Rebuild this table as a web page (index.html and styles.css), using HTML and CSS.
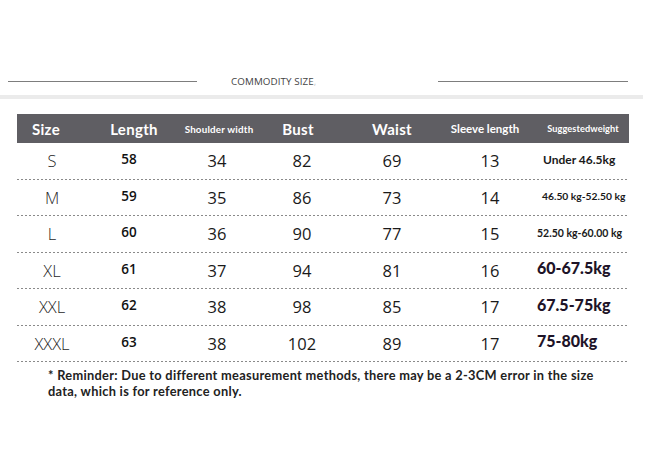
FILE: index.html
```html
<!DOCTYPE html>
<html>
<head>
<meta charset="utf-8">
<link rel="stylesheet" href="styles.css">
</head>
<body>
<div class="page">
  <div class="title-row">
    <span class="rule rule-left"></span>
    <span class="title">COMMODITY SIZE<span class="comma">,</span></span>
    <span class="spacer"></span>
    <span class="rule rule-right"></span>
  </div>
  <div class="band"></div>

  <div class="table">
    <div class="head">
      <div class="hc big">Size</div>
      <div class="hc big">Length</div>
      <div class="hc small">Shoulder width</div>
      <div class="hc big">Bust</div>
      <div class="hc big">Waist</div>
      <div class="hc mid">Sleeve length</div>
      <div class="hc tiny">Suggestedweight</div>
    </div>

    <div class="row">
      <div class="c size">S</div><div class="c len">58</div><div class="c num">34</div><div class="c num">82</div><div class="c num">69</div><div class="c num">13</div><div class="c w w-a">Under 46.5kg</div>
    </div>
    <div class="row">
      <div class="c size">M</div><div class="c len">59</div><div class="c num">35</div><div class="c num">86</div><div class="c num">73</div><div class="c num">14</div><div class="c w w-b">46.50 kg-52.50 kg</div>
    </div>
    <div class="row">
      <div class="c size">L</div><div class="c len">60</div><div class="c num">36</div><div class="c num">90</div><div class="c num">77</div><div class="c num">15</div><div class="c w w-c">52.50 kg-60.00 kg</div>
    </div>
    <div class="row">
      <div class="c size">XL</div><div class="c len">61</div><div class="c num">37</div><div class="c num">94</div><div class="c num">81</div><div class="c num">16</div><div class="c w w-big">60-67.5kg</div>
    </div>
    <div class="row">
      <div class="c size">XXL</div><div class="c len">62</div><div class="c num">38</div><div class="c num">98</div><div class="c num">85</div><div class="c num">17</div><div class="c w w-big">67.5-75kg</div>
    </div>
    <div class="row">
      <div class="c size">XXXL</div><div class="c len">63</div><div class="c num">38</div><div class="c num">102</div><div class="c num">89</div><div class="c num">17</div><div class="c w w-big">75-80kg</div>
    </div>
  </div>

  <p class="note">* Reminder: Due to different measurement methods, there may be a 2-3CM error in the size<br>data, which is for reference only.</p>
</div>
</body>
</html>
```

FILE: styles.css
```css
html, body {
  margin: 0;
  padding: 0;
  background: #ffffff;
}

.page {
  width: 645px;
  height: 469px;
  padding-top: 74px;
  box-sizing: border-box;
  font-family: "Lato", "Open Sans", sans-serif;
  color: #222;
}

.title-row {
  display: flex;
  align-items: center;
  height: 14px;
  padding-left: 8px;
  padding-right: 17px;
}

.rule {
  display: block;
  height: 1px;
  background: #7d7d7d;
}

.rule-left {
  width: 189px;
}

.rule-right {
  width: 190px;
}

.title {
  margin-left: 34px;
  font-family: "Open Sans", sans-serif;
  font-size: 9.8px;
  color: #444;
  letter-spacing: 0.1px;
}

.comma {
  color: #c8c8c8;
}

.spacer {
  flex: 1;
}

.band {
  margin-top: 7px;
  height: 4px;
  background: #ebebeb;
  margin-right: 2px;
}

.table {
  margin: 15px 16px 0 17px;
}

.head {
  display: grid;
  grid-template-columns: 58px 118px 52px 106px 82px 104px 92px;
  height: 29px;
  background: #5f5e63;
  color: #ffffff;
  font-weight: 700;
}

.hc {
  display: flex;
  align-items: center;
  justify-content: center;
  white-space: nowrap;
}

.hc.big {
  font-size: 15px;
  letter-spacing: 0.3px;
}

.hc.mid {
  font-size: 11.5px;
}

.hc.small {
  font-size: 9.8px;
  letter-spacing: 0.2px;
}

.hc.tiny {
  font-size: 9.2px;
  letter-spacing: 0.1px;
}

.row {
  display: grid;
  grid-template-columns: 70px 84px 92px 78px 102px 94px 92px;
  height: 36.5px;
  background-image: linear-gradient(to right, #8a8a8a 50%, transparent 50%);
  background-size: 4px 1px;
  background-repeat: repeat-x;
  background-position: left bottom;
}

.c {
  display: flex;
  align-items: center;
  justify-content: center;
  white-space: nowrap;
  padding-bottom: 1px;
}

.size {
  font-family: "Open Sans", sans-serif;
  font-weight: 300;
  font-size: 16.5px;
  color: #1f1f1f;
}

.len {
  font-family: "Open Sans", sans-serif;
  font-weight: 600;
  font-size: 13.5px;
  color: #111;
  padding-bottom: 4px;
}

.num {
  font-family: "Open Sans", sans-serif;
  font-weight: 400;
  font-size: 16.5px;
  color: #1a1a1a;
}

.w {
  justify-content: flex-start;
  font-weight: 700;
  color: #1a1a1a;
  padding-bottom: 3px;
}

.w-a {
  font-size: 12px;
  padding-left: 6px;
}

.w-b {
  font-size: 10.3px;
  padding-left: 5px;
}

.w-c {
  font-size: 10.5px;
}

.w-big {
  font-size: 16px;
  font-weight: 900;
  color: #1e1428;
  padding-bottom: 6px;
}

.note {
  margin: 6px 0 0 48px;
  font-weight: 700;
  font-size: 12.8px;
  line-height: 15.5px;
  letter-spacing: 0.3px;
  color: #222;
}
```
